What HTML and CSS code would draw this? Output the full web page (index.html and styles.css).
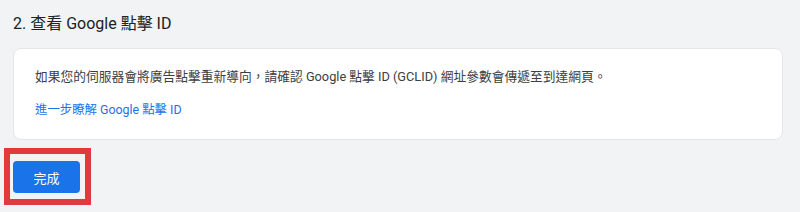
FILE: index.html
```html
<!doctype html>
<html lang="zh-Hant">
<head>
  <meta charset="utf-8">
  <title>查看 Google 點擊 ID</title>
  <link rel="stylesheet" href="styles.css">
</head>
<body>
  <div class="page">
    <h2 class="step-title">2. 查看 Google 點擊 ID</h2>
    <section class="card">
      <p>如果您的伺服器會將廣告點擊重新導向，請確認 Google 點擊 ID (GCLID) 網址參數會傳遞至到達網頁。</p>
      <a href="#" class="learn-more">進一步瞭解 Google 點擊 ID</a>
    </section>
    <div class="highlight">
      <button class="done">完成</button>
    </div>
  </div>
</body>
</html>
```
FILE: styles.css
```css
:root {
  --bg: #f1f3f4;
  --text: #202124;
  --text-body: #3c4043;
  --blue: #1a73e8;
  --border: #e3e5e8;
  --mark: #e0393e;
}
* { box-sizing: border-box; margin: 0; padding: 0; }
body {
  background: var(--bg);
  font-family: Roboto, "Noto Sans CJK TC", sans-serif;
  color: var(--text);
}
.page {
  padding: 12px 17px 0 13px;
}
.step-title {
  font-size: 16px;
  font-weight: 400;
  line-height: 24px;
  margin-bottom: 12px;
}
/* Card */
.card {
  background: #fff;
  border: 1px solid var(--border);
  border-radius: 8px;
  padding: 18px 21px 19px;
  font-size: 12.75px;
  line-height: 20px;
  color: var(--text-body);
}
.card p {
  margin-bottom: 13px;
}
.learn-more {
  color: var(--blue);
  font-size: 12.4px;
  text-decoration: none;
}
/* Done button with red annotation box */
.highlight {
  display: inline-block;
  margin: 8px 0 0 -9px;
  border: 6px solid var(--mark);
  padding: 7px 5px 6px 3px;
}
.done {
  display: block;
  width: 67px;
  height: 32px;
  border: none;
  border-radius: 4px;
  background: var(--blue);
  color: #fff;
  font-family: Roboto, "Noto Sans CJK TC", sans-serif;
  font-size: 13px;
  cursor: pointer;
}
```
